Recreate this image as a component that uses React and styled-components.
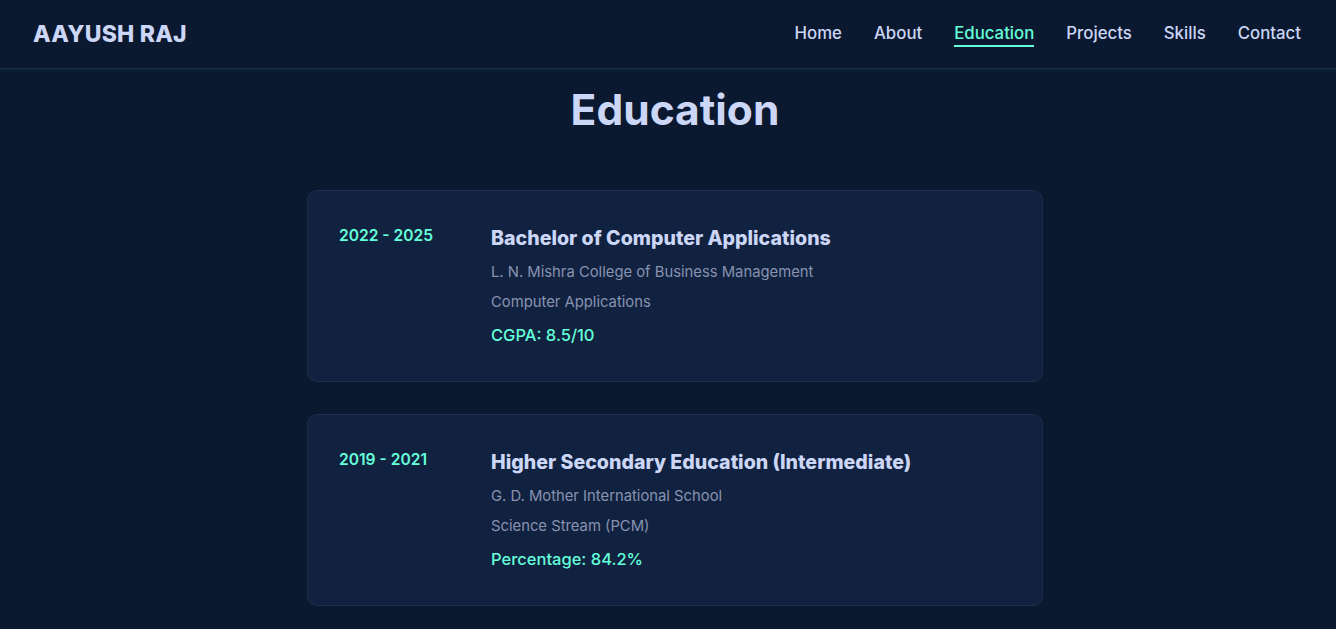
import React from "react";
import styled, { createGlobalStyle } from "styled-components";

const GlobalStyle = createGlobalStyle`
    * {
        box-sizing: border-box;
    }
    body {
        margin: 0;
        background-color: #0a192f;
        font-family: "Inter", "Open Sans", sans-serif;
        color: #ccd6f6;
    }
`;

const links = ["Home", "About", "Education", "Projects", "Skills", "Contact"];

const education = [
    {
        years: "2022 - 2025",
        degree: "Bachelor of Computer Applications",
        school: "L. N. Mishra College of Business Management",
        field: "Computer Applications",
        score: "CGPA: 8.5/10",
    },
    {
        years: "2019 - 2021",
        degree: "Higher Secondary Education (Intermediate)",
        school: "G. D. Mother International School",
        field: "Science Stream (PCM)",
        score: "Percentage: 84.2%",
    },
];

const App = () => {
    return (
        <>
            <GlobalStyle />
            <Header>
                <Logo>AAYUSH RAJ</Logo>
                <NavLinks>
                    {links.map((link) => (
                        <NavLink key={link} href="#" $active={link === "Education"}>
                            {link}
                        </NavLink>
                    ))}
                </NavLinks>
            </Header>
            <Section>
                <Title>Education</Title>
                <CardList>
                    {education.map((item) => (
                        <Card key={item.years}>
                            <Years>{item.years}</Years>
                            <Details>
                                <Degree>{item.degree}</Degree>
                                <School>{item.school}</School>
                                <Field>{item.field}</Field>
                                <Score>{item.score}</Score>
                            </Details>
                        </Card>
                    ))}
                </CardList>
            </Section>
        </>
    );
};

export default App;

const Header = styled.header`
    height: 69px;
    display: flex;
    align-items: center;
    justify-content: space-between;
    padding: 0 35px 0 33px;
    background-color: #0a192f;
    border-bottom: 1px solid #17304a;
    box-shadow: 0 2px 3px rgba(100, 255, 218, 0.06);
`;

const Logo = styled.div`
    font-size: 23px;
    font-weight: 800;
    color: #ccd6f6;
    letter-spacing: 0.2px;
`;

const NavLinks = styled.nav`
    display: flex;
    gap: 32px;
`;

const NavLink = styled.a`
    font-size: 16.8px;
    font-weight: 500;
    line-height: 20px;
    text-decoration: none;
    color: ${(p) => (p.$active ? "#64ffda" : "#ccd6f6")};
    padding: 0 0 2px;
    margin-top: 1px;
    border-bottom: 2px solid ${(p) => (p.$active ? "#64ffda" : "transparent")};
`;

const Section = styled.section`
    padding: 16px 0 40px 14px;
    display: flex;
    flex-direction: column;
    align-items: center;
`;

const Title = styled.h2`
    margin: 0 0 55px;
    font-size: 42.5px;
    font-weight: 700;
    line-height: 50px;
    color: #ccd6f6;
`;

const CardList = styled.div`
    width: 736px;
    display: flex;
    flex-direction: column;
    gap: 32px;
`;

const Card = styled.div`
    display: flex;
    gap: 32px;
    padding: 33px 31px 32px;
    background-color: #112240;
    border: 1px solid #1d2d4b;
    border-radius: 10px;
`;

const Years = styled.div`
    width: 120px;
    flex-shrink: 0;
    font-size: 15.6px;
    font-weight: 600;
    line-height: 24px;
    color: #64ffda;
`;

const Details = styled.div`
    display: flex;
    flex-direction: column;
`;

const Degree = styled.h3`
    margin: 0 0 8px;
    font-size: 19.6px;
    font-weight: 800;
    line-height: 28px;
    color: #ccd6f6;
`;

const School = styled.p`
    margin: 0 0 6px;
    font-size: 14.8px;
    line-height: 24px;
    color: #8892b0;
`;

const Field = styled(School)`
    margin-bottom: 8px;
`;

const Score = styled.p`
    margin: 0 0 1px;
    font-size: 16.5px;
    font-weight: 500;
    line-height: 26px;
    color: #64ffda;
`;
